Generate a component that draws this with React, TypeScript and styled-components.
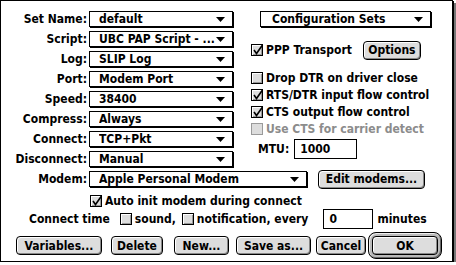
import React from 'react';
import styled, { createGlobalStyle } from 'styled-components';

const GlobalStyle = createGlobalStyle`
  html, body {
    margin: 0;
    padding: 0;
    background: #ffffff;
  }
  body {
    font-family: "DejaVu Sans Condensed", "DejaVu Sans", sans-serif;
    font-weight: bold;
    font-size: 12px;
    color: #000;
  }
`;

const Window = styled.div`
  width: 453px;
  height: 262px;
  box-sizing: border-box;
  border: 1px solid #000;
  box-shadow: 1px 1px 0 #000, 3px 3px 0 #777;
  background: #fff;
  padding-top: 10px;
`;

const Top = styled.div`
  display: flex;
  align-items: flex-start;
`;

const FieldGrid = styled.div`
  display: grid;
  grid-template-columns: 86px 144px;
  column-gap: 2px;
  grid-auto-rows: 16px;
  row-gap: 4px;
`;

const Label = styled.div`
  text-align: right;
  line-height: 16px;
  white-space: nowrap;
`;

const Popup = styled.div<{ $w: number }>`
  width: ${({ $w }) => $w}px;
  height: 16px;
  box-sizing: border-box;
  border: 1px solid #000;
  box-shadow: 1px 1px 0 #000;
  background: #fff;
  display: flex;
  align-items: center;
  padding: 0 7px 0 9px;
  line-height: 14px;
  white-space: nowrap;
`;

const PopupText = styled.span`
  flex: 1;
  overflow: hidden;
`;

const Arrow = () => (
  <svg width="9" height="5" viewBox="0 0 9 5">
    <polygon points="0,0 9,0 4.5,5" fill="#000" />
  </svg>
);

const RightCol = styled.div`
  display: flex;
  flex-direction: column;
  margin-left: 18px;
`;

const ConfigPopup = styled(Popup)`
  margin-left: 9px;
  padding-left: 11px;
`;

const PPPRow = styled.div`
  display: flex;
  align-items: center;
  height: 20px;
  margin-top: 13px;
`;

const CheckList = styled.div`
  display: flex;
  flex-direction: column;
  margin-top: 9px;
`;

const CheckRow = styled.div<{ $disabled?: boolean }>`
  display: flex;
  align-items: center;
  height: 17px;
  white-space: nowrap;
  color: ${({ $disabled }) => ($disabled ? '#8c8c8c' : '#000')};
`;

const Box = styled.span<{ $disabled?: boolean }>`
  position: relative;
  width: 12px;
  height: 12px;
  box-sizing: border-box;
  border: 1px solid ${({ $disabled }) => ($disabled ? '#9a9a9a' : '#000')};
  background: #dddddd;
  box-shadow: ${({ $disabled }) =>
    $disabled ? 'none' : 'inset 1px 1px 0 #fff, inset -1px -1px 0 #999'};
  margin-right: 3px;
  flex-shrink: 0;
`;

const Tick = styled.svg`
  position: absolute;
  left: 0;
  top: -2px;
`;

const Check: React.FC<{ checked?: boolean; disabled?: boolean }> = ({
  checked,
  disabled,
}) => (
  <Box $disabled={disabled}>
    {checked && (
      <Tick width="12" height="12" viewBox="0 0 12 12">
        <polyline
          points="2,7 4.5,10.5 10.5,2"
          fill="none"
          stroke="#000"
          strokeWidth="1.6"
        />
      </Tick>
    )}
  </Box>
);

const Button = styled.div<{ $w: number; $ml?: number }>`
  width: ${({ $w }) => $w}px;
  height: 19px;
  margin-left: ${({ $ml }) => $ml ?? 0}px;
  box-sizing: border-box;
  border: 1px solid #000;
  border-radius: 4px;
  background: #dddddd;
  box-shadow: inset 1px 1px 0 #fff, inset -1px -1px 0 #888;
  display: flex;
  align-items: center;
  justify-content: center;
  white-space: nowrap;
  flex-shrink: 0;
`;

const DefaultRing = styled.div<{ $ml?: number }>`
  margin-left: ${({ $ml }) => $ml ?? 0}px;
  padding: 3px;
  border: 1px solid #000;
  border-radius: 8px;
  background: #bbbbbb;
  box-shadow: inset 1px 1px 0 #eee, inset -1px -1px 0 #666;
  display: flex;
`;

const OptionsButton = styled(Button)`
  margin-left: 11px;
`;

const MtuRow = styled.div`
  display: flex;
  align-items: center;
  margin-top: 2px;
  padding-left: 7px;
`;

const TextField = styled.div<{ $w: number; $ml?: number }>`
  width: ${({ $w }) => $w}px;
  height: 20px;
  box-sizing: border-box;
  border: 1px solid #000;
  background: #fff;
  display: flex;
  align-items: center;
  padding-left: 5px;
  margin: 0 4px 0 ${({ $ml }) => $ml ?? 5}px;
`;

const ModemRow = styled.div`
  display: flex;
  align-items: center;
  height: 16px;
  margin-top: 4px;
`;

const ModemLabel = styled(Label)`
  width: 86px;
  margin-right: 2px;
`;

const EditModems = styled(Button)`
  margin-left: 11px;
`;

const AutoRow = styled(CheckRow)`
  margin-top: 5px;
  padding-left: 89px;
`;

const ConnectRow = styled.div`
  display: flex;
  align-items: center;
  height: 20px;
  padding-left: 28px;
  white-space: nowrap;
`;

const Spacer = styled.span<{ $w: number }>`
  display: inline-block;
  width: ${({ $w }) => $w}px;
`;

const ButtonRow = styled.div`
  display: flex;
  align-items: center;
  margin-top: 3px;
  padding-left: 15px;
`;

const fields: [string, string][] = [
  ['Set Name:', 'default'],
  ['Script:', 'UBC PAP Script - ...'],
  ['Log:', 'SLIP Log'],
  ['Port:', 'Modem Port'],
  ['Speed:', '38400'],
  ['Compress:', 'Always'],
  ['Connect:', 'TCP+Pkt'],
  ['Disconnect:', 'Manual'],
];

const checks = [
  { text: 'Drop DTR on driver close', checked: false },
  { text: 'RTS/DTR input flow control', checked: true },
  { text: 'CTS output flow control', checked: true },
  { text: 'Use CTS for carrier detect', checked: false, disabled: true },
];

export default function App() {
  return (
    <>
      <GlobalStyle />
      <Window>
        <Top>
          <FieldGrid>
            {fields.map(([label, value]) => (
              <React.Fragment key={label}>
                <Label>{label}</Label>
                <Popup $w={144}>
                  <PopupText>{value}</PopupText>
                  <Arrow />
                </Popup>
              </React.Fragment>
            ))}
          </FieldGrid>
          <RightCol>
            <ConfigPopup $w={171}>
              <PopupText>Configuration Sets</PopupText>
              <Arrow />
            </ConfigPopup>
            <PPPRow>
              <Check checked />
              <span>PPP Transport</span>
              <OptionsButton $w={58}>Options</OptionsButton>
            </PPPRow>
            <CheckList>
              {checks.map((c) => (
                <CheckRow key={c.text} $disabled={c.disabled}>
                  <Check checked={c.checked} disabled={c.disabled} />
                  <span>{c.text}</span>
                </CheckRow>
              ))}
            </CheckList>
            <MtuRow>
              <span>MTU:</span>
              <TextField $w={63}>1000</TextField>
            </MtuRow>
          </RightCol>
        </Top>
        <ModemRow>
          <ModemLabel>Modem:</ModemLabel>
          <Popup $w={218}>
            <PopupText>Apple Personal Modem</PopupText>
            <Arrow />
          </Popup>
          <EditModems $w={107}>Edit modems...</EditModems>
        </ModemRow>
        <AutoRow>
          <Check checked />
          <span>Auto init modem during connect</span>
        </AutoRow>
        <ConnectRow>
          <span>Connect time</span>
          <Spacer $w={10} />
          <Check />
          <span>sound,</span>
          <Spacer $w={6} />
          <Check />
          <span>notification, every</span>
          <TextField $w={50} $ml={15}>0</TextField>
          <span>minutes</span>
        </ConnectRow>
        <ButtonRow>
          <Button $w={86}>Variables...</Button>
          <Button $w={52} $ml={9}>Delete</Button>
          <Button $w={55} $ml={11}>New...</Button>
          <Button $w={75} $ml={7}>Save as...</Button>
          <Button $w={50} $ml={5}>Cancel</Button>
          <DefaultRing $ml={2}>
            <Button $w={66}>OK</Button>
          </DefaultRing>
        </ButtonRow>
      </Window>
    </>
  );
}
